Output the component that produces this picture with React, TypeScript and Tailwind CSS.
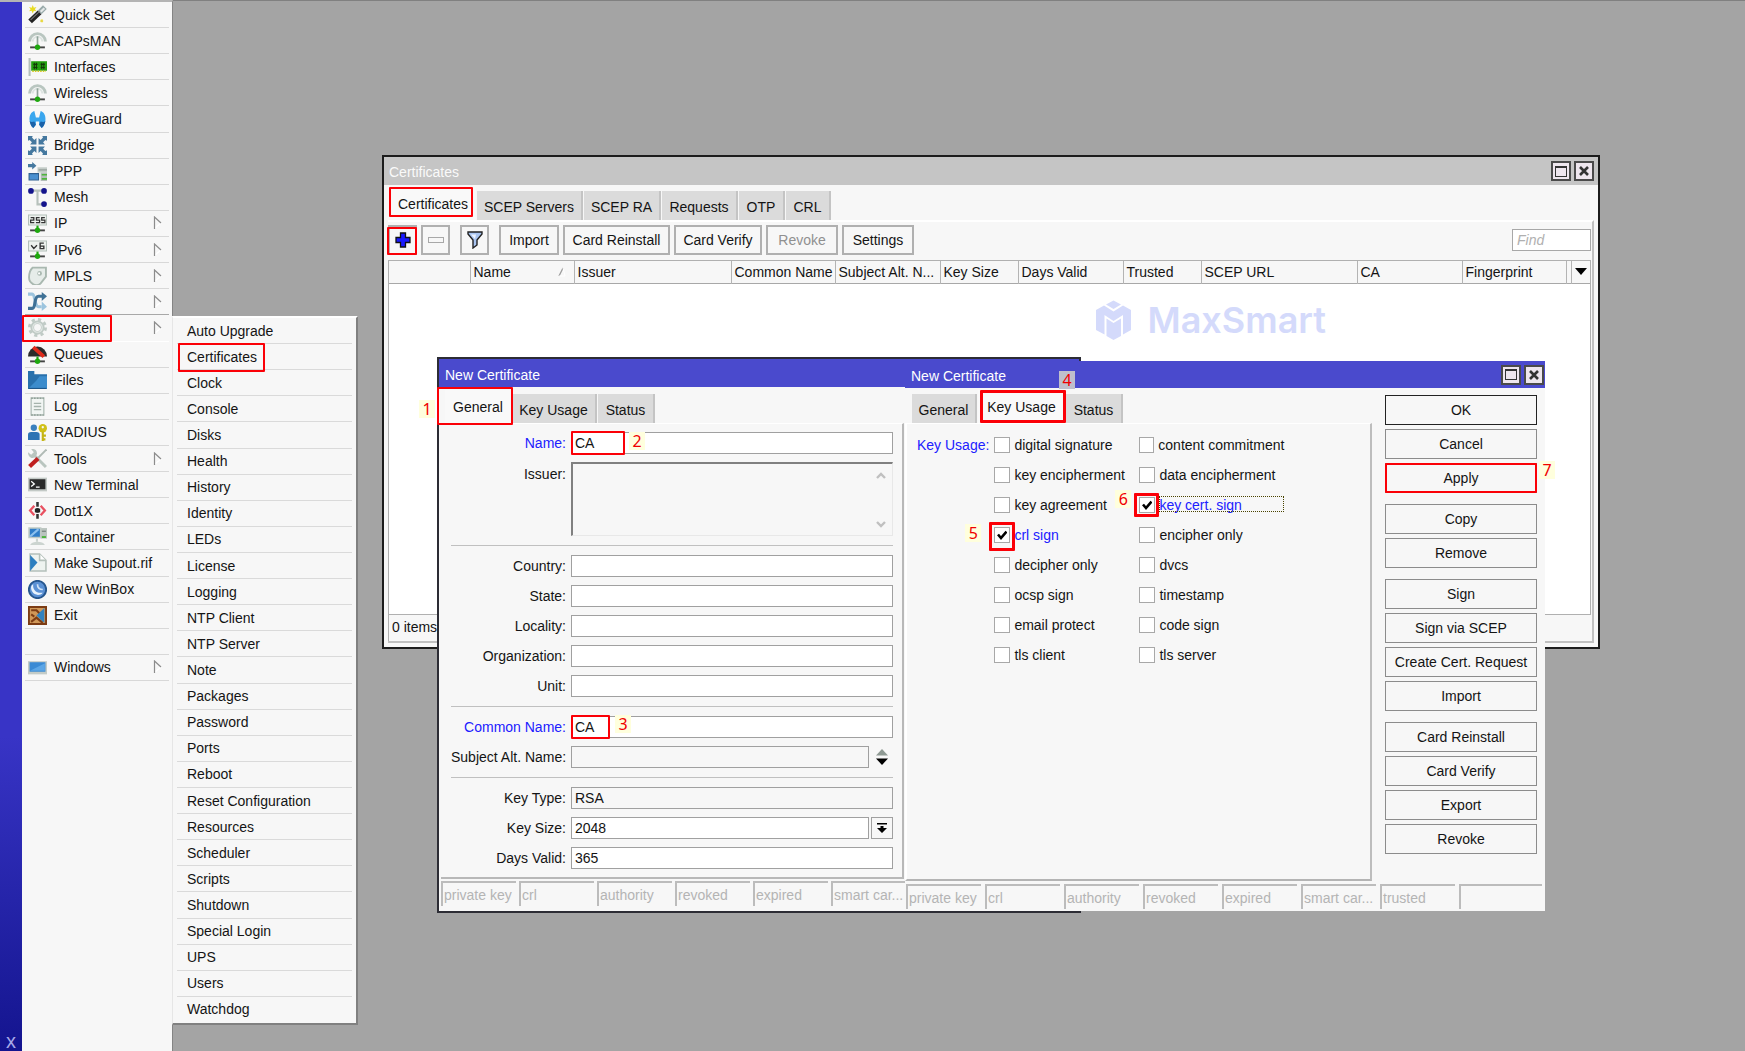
import { ReactNode, useState } from "react";
import cx from "clsx";

type MenuItem = { label: string; icon: ReactNode; more?: boolean };

const Plug = () => (
  <>
    <path d="M2 15.5h14" stroke="#444" strokeWidth="1.8" />
    <circle cx="9" cy="15.4" r="2.5" fill="#1fa80f" />
  </>
);

const Antenna = () => (
  <>
    <path d="M1.5 10a7.5 7.5 0 0 1 15 0" fill="none" stroke="#b9c6c0" strokeWidth="2.8" />
    <path d="M4.5 10a4.5 4.5 0 0 1 9 0" fill="none" stroke="#dde4e1" strokeWidth="1.8" />
    <path d="M9 5v9" stroke="#8fa39a" strokeWidth="1.6" />
    <Plug />
  </>
);

const icons = {
  quickSet: (
    <>
      <path d="M2 15.5 11 7" stroke="#222" strokeWidth="5" />
      <path d="M11 7l5-5" stroke="#9aa" strokeWidth="5" />
      <path d="M12 6.500l3.500-3.500" stroke="#e4e8e8" strokeWidth="2" />
      <path d="M2.500 14 11 6" stroke="#777" strokeWidth="1" />
      <path d="M4.500 0l1 2.500L8 2l-1.500 2L8 6 5.500 5.500 4.500 8 3.500 5.500 1 6l1.500-2L1 2l2.500.5z" fill="#e8dc22" />
      <path d="M12 14l2 2m0-2l-2 2" stroke="#e8d840" strokeWidth="1.4" />
    </>
  ),
  interfaces: (
    <>
      <path d="M1.500 1v17" stroke="#b4c0bb" strokeWidth="2" />
      <path d="M3 4h15v9H3z" fill="#22a010" />
      <path d="M4 13.500h13" stroke="#d8c820" strokeWidth="1.500" strokeDasharray="1.500 1" />
      <path d="M5 7h4M5 10h4M6 5.500v6M8 5.500v6M12 7h4M12 10h4M13 5.500v6M15 5.500v6" stroke="#123808" strokeWidth="1" />
    </>
  ),
  wireGuard: (
    <>
      <path d="M6 1C3 2 1 5 1.500 10 2 12 2.500 15 5 17L7.500 14 7.500 11h3v3l2.500 3c2.500-2 3-5 3.500-7C17 5 15 2 12 1l-1.500 6h-3z" fill="#3aa6ee" />
      <path d="M1.500 10.500C3 12 5 11 6 11l1.500 3L5 17c-2-1-3-4-3.500-6.500zM16.500 10.500C15 12 13 11 12 11l-1.500 3L13 17c2-1 3-4 3.500-6.500z" fill="#1b62a8" />
    </>
  ),
  bridge: (
    <path
      d="M0 0h4.500L3.800 1.500 6 3.700 8 2v6H2l1.700-2L1.500 3.800 0 4.500zM18 0h-4.500l.7 1.500L12 3.700 10 2v6h6l-1.700-2 2.200-2.200 1.500.7zM0 18h4.500l-.7-1.500L6 14.300 8 16v-6H2l1.700 2-2.200 2.200-1.500-.7zM18 18h-4.500l.7-1.500L12 14.300 10 16v-6h6l-1.700 2 2.200 2.200 1.500-.7z"
      fill="#45789f"
    />
  ),
  ppp: (
    <>
      <path d="M0 2h4V0l4 3.500L4 7V5H0z" fill="#45789f" />
      <path d="M1 11h9v6H1z" fill="#4a90d0" stroke="#2f5f8f" />
      <path d="M9 5h9v5H9z" fill="#c4ccc8" />
      <path d="M12 10h6v8h-6z" fill="#b4beb9" />
      <path d="M13 12h5M13 16h5" stroke="#4fb53c" strokeWidth="1.500" />
      <path d="M10 7.500h8" stroke="#8b9691" />
    </>
  ),
  mesh: (
    <>
      <path d="M2.500 2.500h13M9 2.500v13h7" fill="none" stroke="#b7c1bc" strokeWidth="2" />
      <circle cx="2.800" cy="2.800" r="2.700" fill="#14148c" />
      <circle cx="15.200" cy="2.800" r="2.700" fill="#14148c" />
      <circle cx="15.200" cy="15.200" r="2.700" fill="#14148c" />
    </>
  ),
  ip: (
    <>
      <path d="M.5 1h17v9.500H.5z" fill="#eef2ef" stroke="#b4c0ba" />
      <path d="M2.500 3.500h3v2.300h-3v2.400h3.500M7.500 8.200H11V5.800H8V3.500h3M12.500 8.200H16V5.800h-3V3.500h3" fill="none" stroke="#333" strokeWidth="1.200" />
      <path d="M9 11v3" stroke="#1fa80f" strokeWidth="2" />
      <Plug />
    </>
  ),
  ipv6: (
    <>
      <path d="M.5 1h17v9.500H.5z" fill="#eef2ef" stroke="#b4c0ba" />
      <path d="M3 5l2.500 3L8.500 5M15 3h-3.500v5.200H15V5.800h-3" fill="none" stroke="#333" strokeWidth="1.300" />
      <path d="M9 11v3" stroke="#1fa80f" strokeWidth="2" />
      <Plug />
    </>
  ),
  mpls: (
    <>
      <path d="M4.500 1.500H17V10l-5 6.500a6 6 0 0 1-7.500.5A7 7 0 0 1 1 11c0-4 .5-7 3.500-9.500z" fill="#e6ece9" stroke="#a9b8b0" strokeWidth="1.800" />
      <circle cx="11" cy="7" r="2.200" fill="#a9b8b0" />
      <circle cx="10.500" cy="7" r="1" fill="#fff" />
    </>
  ),
  routing: (
    <>
      <path d="M0 2h4c3 0 2 12 6 12h3" fill="none" stroke="#9cc4de" strokeWidth="3" />
      <path d="M13 9l5 5-5 4z" fill="#9cc4de" />
      <path d="M0 15.500h4c4 0 1-11.500 6-11.500h4" fill="none" stroke="#3f7196" strokeWidth="3" />
      <path d="M13 0l5 4-5 4.500z" fill="#3f7196" />
    </>
  ),
  system: (
    <>
      <circle cx="9" cy="9" r="5" fill="none" stroke="#c0cbc6" strokeWidth="3.500" />
      <circle cx="9" cy="9" r="7.600" fill="none" stroke="#c0cbc6" strokeWidth="2.800" strokeDasharray="3 3" />
      <circle cx="9" cy="9" r="4.500" fill="none" stroke="#e4eae7" strokeWidth="1" />
    </>
  ),
  queues: (
    <>
      <path d="M0 11a9 9.500 0 0 1 18 0z" fill="#2b2b2b" />
      <path d="M5 2l10 9" stroke="#e02c1c" strokeWidth="3.600" />
      <path d="M9 11v3" stroke="#1fa80f" strokeWidth="2" />
      <Plug />
    </>
  ),
  files: (
    <>
      <path d="M0 0h6v3h12v14H0z" fill="#2870ac" />
      <path d="M0 17L8 9l3-4h7v12z" fill="#3c8ccc" />
      <path d="M.5 16.500h17" stroke="#1d5486" />
    </>
  ),
  log: (
    <>
      <path d="M3 1h12v16H3z" fill="#f1f5f3" stroke="#b4c0ba" strokeWidth="1.300" />
      <path d="M3 1.200h12M3 17h12" stroke="#8fa097" strokeWidth="1.500" strokeDasharray="1.500 1.200" />
      <path d="M5.500 6h7M5.500 9h7M5.500 12h7" stroke="#a5b3ac" strokeWidth="1.200" />
    </>
  ),
  radius: (
    <>
      <circle cx="5.500" cy="4.500" r="3" fill="#3a80be" />
      <path d="M0 16V11q0-2.500 3-2.500h5q3 0 3 2.500v5z" fill="#2f74b4" />
      <circle cx="14" cy="5" r="4" fill="#d0c018" />
      <circle cx="14" cy="4" r="1.100" fill="#f7f7f7" />
      <path d="M14 8v9M14 12h3M14 15.500h2.500" stroke="#c4b414" strokeWidth="2" />
    </>
  ),
  tools: (
    <>
      <path d="M5 5l12 12" stroke="#b9c5bf" strokeWidth="2.800" />
      <path d="M0 3l3 2.500L5.500 3 3 0c3-.5 6 1 5.500 5L5 8.500C2 9 0 6 0 3z" fill="#b9c5bf" />
      <path d="M17.500.5L9 9" stroke="#b0bab5" strokeWidth="1.800" />
      <path d="M1.500 16.500L9.500 9" stroke="#c02020" strokeWidth="4" />
    </>
  ),
  terminal: (
    <>
      <path d="M0 2.500h18v13H0z" fill="#c3c9c6" />
      <path d="M1.500 4h15v9.500h-15z" fill="#2a2a2a" />
      <path d="M3 6l3 2.500L3 11M7.500 11.500H11" fill="none" stroke="#fff" strokeWidth="1.200" />
    </>
  ),
  dot1x: (
    <>
      <path d="M6 4.500L2 9l4 4.500M12 4.500L16 9l-4 4.500" fill="none" stroke="#e85060" strokeWidth="2.200" />
      <path d="M9 1v16" stroke="#333" strokeWidth="2.400" strokeDasharray="4.500 1.200" />
      <path d="M6.500 9h5" stroke="#222" strokeWidth="3.600" />
    </>
  ),
  container: (
    <>
      <path d="M12 1h6v10h-6z" fill="#b9c3be" />
      <path d="M13 4h4" stroke="#6d7772" />
      <path d="M13 9.500h4" stroke="#34b020" strokeWidth="1.500" />
      <path d="M1 1h11v9H1z" fill="#2f7dc8" stroke="#c0cac5" strokeWidth="1.500" />
      <path d="M2 9l8-7" stroke="#8cc0ee" strokeWidth="2" />
      <path d="M2 17c2-4 12-4 14 0z" fill="#ccd4d0" />
      <path d="M8.500 11v3" stroke="#ccd4d0" strokeWidth="2" />
    </>
  ),
  supout: (
    <>
      <path d="M2 1h9l6 6v10H2z" fill="#eef3f0" stroke="#b4c0ba" strokeWidth="1.500" />
      <path d="M11 1v6h6" fill="#fff" stroke="#b4c0ba" strokeWidth="1.500" />
      <path d="M2 2l7 7-7 8z" fill="#2c7fc0" />
    </>
  ),
  winbox: (
    <>
      <circle cx="9" cy="9" r="8.200" fill="#5a90d4" stroke="#26568e" strokeWidth="1.800" />
      <path d="M5 4c-1 5 3 9 9 8-2 3-8 3-10-1S3 5 5 4z" fill="#e8f2fc" />
      <path d="M9 4c0 3 2 5 5 5" fill="none" stroke="#cfe2f6" strokeWidth="1.600" />
    </>
  ),
  exit: (
    <>
      <path d="M.8.8h16.400v16.400H.8z" fill="#d09858" stroke="#7c3c14" strokeWidth="2" />
      <path d="M3 4h5l3 3M3 8l3 2M3 15l5-4 6 5" fill="none" stroke="#7c3c14" strokeWidth="2" />
      <path d="M15.500 2v14L8 9z" fill="#3182c0" />
    </>
  ),
  windows: (
    <>
      <path d="M0 3h18v12.500H0z" fill="#c3cbc7" />
      <path d="M1.500 4h15v9h-15z" fill="#3a8ad4" />
      <path d="M2 12l14-7v7z" fill="#5ca6e6" />
    </>
  ),
};

const menu: (MenuItem | null)[] = [
  { label: "Quick Set", icon: icons.quickSet },
  { label: "CAPsMAN", icon: <Antenna /> },
  { label: "Interfaces", icon: icons.interfaces },
  { label: "Wireless", icon: <Antenna /> },
  { label: "WireGuard", icon: icons.wireGuard },
  { label: "Bridge", icon: icons.bridge },
  { label: "PPP", icon: icons.ppp },
  { label: "Mesh", icon: icons.mesh },
  { label: "IP", icon: icons.ip, more: true },
  { label: "IPv6", icon: icons.ipv6, more: true },
  { label: "MPLS", icon: icons.mpls, more: true },
  { label: "Routing", icon: icons.routing, more: true },
  { label: "System", icon: icons.system, more: true },
  { label: "Queues", icon: icons.queues },
  { label: "Files", icon: icons.files },
  { label: "Log", icon: icons.log },
  { label: "RADIUS", icon: icons.radius },
  { label: "Tools", icon: icons.tools, more: true },
  { label: "New Terminal", icon: icons.terminal },
  { label: "Dot1X", icon: icons.dot1x },
  { label: "Container", icon: icons.container },
  { label: "Make Supout.rif", icon: icons.supout },
  { label: "New WinBox", icon: icons.winbox },
  { label: "Exit", icon: icons.exit },
  null,
  { label: "Windows", icon: icons.windows, more: true },
];

const systemMenu = [
  "Auto Upgrade", "Certificates", "Clock", "Console", "Disks", "Health", "History",
  "Identity", "LEDs", "License", "Logging", "NTP Client", "NTP Server", "Note",
  "Packages", "Password", "Ports", "Reboot", "Reset Configuration", "Resources",
  "Scheduler", "Scripts", "Shutdown", "Special Login", "UPS", "Users", "Watchdog",
];

const columns = [
  { label: "", width: "w-[81px]" },
  { label: "Name", width: "w-[104px]", sorted: true },
  { label: "Issuer", width: "w-[157px]" },
  { label: "Common Name", width: "w-[104px]" },
  { label: "Subject Alt. N...", width: "w-[105px]" },
  { label: "Key Size", width: "w-[78px]" },
  { label: "Days Valid", width: "w-[105px]" },
  { label: "Trusted", width: "w-[78px]" },
  { label: "SCEP URL", width: "w-[156px]" },
  { label: "CA", width: "w-[105px]" },
  { label: "Fingerprint", width: "w-[104px]" },
  { label: "", width: "w-[5px]" },
];

const usages = [
  "digital signature", "content commitment",
  "key encipherment", "data encipherment",
  "key agreement", "key cert. sign",
  "crl sign", "encipher only",
  "decipher only", "dvcs",
  "ocsp sign", "timestamp",
  "email protect", "code sign",
  "tls client", "tls server",
];

const actions = [
  ["OK", "Cancel", "Apply"],
  ["Copy", "Remove"],
  ["Sign", "Sign via SCEP", "Create Cert. Request", "Import"],
  ["Card Reinstall", "Card Verify", "Export", "Revoke"],
];

const flags = ["private key", "crl", "authority", "revoked", "expired", "smart car..."];

// red frame laid over a control
function Mark({ className }: { className: string }) {
  return <span className={cx("pointer-events-none absolute z-10 rounded-[1px] border-[#fb0007]", className)} />;
}

// numbered step label
function Step({ n, className }: { n: number; className: string }) {
  return (
    <span
      className={cx(
        "pointer-events-none absolute z-20 flex h-[18px] w-4 items-center justify-center font-['Noto_Sans',sans-serif] text-base leading-none text-[#f00000]",
        className
      )}
    >
      {n}
    </span>
  );
}

function TitleBar({ title, className, controls = true }: { title: string; className: string; controls?: boolean }) {
  return (
    <header className={cx("flex items-center", className)}>
      <h2 className="flex-1 pt-[2px] text-sm">{title}</h2>
      {controls && (
        <div className="flex gap-[3px]">
          <button aria-label="Maximize" className="flex size-5 items-center justify-center border-2 border-[#4a4a4a] bg-[#eee6ee]">
            <span className="h-[11px] w-3 border border-t-2 border-[#333]" />
          </button>
          <button aria-label="Close" className="flex size-5 items-center justify-center border-2 border-[#4a4a4a] bg-[#eee6ee]">
            <svg viewBox="0 0 10 10" className="size-[10px]">
              <path d="M1 1l8 8M9 1L1 9" stroke="#333" strokeWidth="2.600" />
            </svg>
          </button>
        </div>
      )}
    </header>
  );
}

function Tab({ label, active, className }: { label: string; active?: boolean; className: string }) {
  return (
    <button
      role="tab"
      aria-selected={!!active}
      className={cx(
        "flex justify-center text-sm whitespace-nowrap",
        active ? "h-[33px] bg-[#f9f9f9] pt-[7px]" : "h-[29px] items-center border-r-2 border-[#c4c4c4] bg-[#dbdbdb] pt-[2px]",
        className
      )}
    >
      {label}
    </button>
  );
}

function ToolButton({ children, className, disabled, label }: { children: ReactNode; className: string; disabled?: boolean; label?: string }) {
  return (
    <button
      aria-label={label}
      disabled={disabled}
      className={cx("flex h-[30px] items-center justify-center border-2 border-[#b0b0b0] bg-[#f7f7f7] text-sm whitespace-nowrap disabled:text-[#909090]", className)}
    >
      {children}
    </button>
  );
}

function Field({ id, label, value = "", blue, readOnly, children, after }: {
  id: string;
  label: string;
  value?: string;
  blue?: boolean;
  readOnly?: boolean;
  children?: ReactNode;
  after?: ReactNode;
}) {
  return (
    <div className="flex items-center gap-[5px]">
      <label htmlFor={id} className={cx("w-[115px] text-right text-sm whitespace-nowrap", blue && "text-[#2020ff]")}>
        {label}:
      </label>
      <div className="relative flex flex-1 gap-[2px]">
        <input
          id={id}
          defaultValue={value}
          readOnly={readOnly}
          className={cx(
            "h-[22px] w-full min-w-0 flex-1 border border-[#a0a0a0] px-[3px] text-sm outline-none",
            readOnly ? "bg-[#f7f7f7]" : "bg-white"
          )}
        />
        {after}
        {children}
      </div>
    </div>
  );
}

const Divider = () => (
  <div className="h-[3px] py-[1px]">
    <div className="h-px bg-[#c0c0c0]" />
  </div>
);

function StatusCell({ children, grow }: { children?: ReactNode; grow?: boolean }) {
  return (
    <span
      className={cx(
        "h-[25px] border-t-2 border-l-2 border-[#bcbcbc] pl-px text-sm leading-6 whitespace-nowrap text-[#b4b4b4]",
        grow ? "flex-1" : "w-[75px]"
      )}
    >
      {children}
    </span>
  );
}

function Sidebar() {
  return (
    <nav className="w-[151px] border-t-2 border-r border-t-[#b4b4b4] border-r-[#848484] bg-[#f7f7f7]">
      <ul className="grid h-[679px] auto-rows-fr pr-[3px] pl-[3px]">
        {menu.map((item, i) => (
          <li
            key={i}
            className={cx(
              "relative border-b",
              item?.label === "Routing" ? "border-[#a8a8a8]" : item?.label === "System" ? "border-white" : "border-[#d8d8d8]"
            )}
          >
            {item && (
              <button className="flex h-full w-full items-center gap-[7px] pl-[3px] text-sm whitespace-nowrap">
                <svg viewBox="0 0 18 18" className="size-[19px] shrink-0">
                  {item.icon}
                </svg>
                <span className="flex-1 text-left">{item.label}</span>
                {item.more && (
                  <svg viewBox="0 0 9 14" className="mr-[7px] h-[14px] w-[9px]">
                    <path d="M2 12L8 7" stroke="#fff" strokeWidth="1.500" />
                    <path d="M1.500 13V1L8 7" fill="none" stroke="#8c8c8c" strokeWidth="1.200" />
                  </svg>
                )}
              </button>
            )}
            {item?.label === "System" && <Mark className="top-0 -left-[3px] h-[27px] w-[90px] border-2" />}
          </li>
        ))}
      </ul>
    </nav>
  );
}

function SystemMenu() {
  return (
    <div className="absolute top-[316px] left-[172px] w-[186px] border-t-2 border-r-2 border-b-2 border-l border-t-white border-r-[#808080] border-b-[#808080] border-l-[#e6e6e6] bg-[#f7f7f7] pr-[4px] pl-[4px]">
      <ul className="grid h-[705px] auto-rows-fr">
        {systemMenu.map((label) => (
          <li key={label} className="relative border-b border-[#dadada] last:border-transparent">
            <button className="flex h-full w-full items-center pl-[10px] text-sm whitespace-nowrap">{label}</button>
            {label === "Certificates" && <Mark className="-top-[1px] left-[1px] h-[29px] w-[87px] border-2" />}
          </li>
        ))}
      </ul>
    </div>
  );
}

function CertificatesWindow() {
  return (
    <section className="absolute top-[155px] left-[382px] flex h-[494px] w-[1218px] flex-col border-2 border-[#1c1c1c] bg-[#f7f7f7]">
      <TitleBar title="Certificates" className="h-7 bg-[#c5c5c5] pr-[4px] pl-[5px] text-[#fafafa]" />
      <div role="tablist" className="relative flex h-[35px] items-end gap-px pl-[6px]">
        <Tab label="Certificates" active className="w-[86px]" />
        <Tab label="SCEP Servers" className="w-[106px]" />
        <Tab label="SCEP RA" className="w-[77px]" />
        <Tab label="Requests" className="w-[76px]" />
        <Tab label="OTP" className="w-[46px]" />
        <Tab label="CRL" className="w-[45px]" />
        <Mark className="top-[2px] left-[5px] h-[30px] w-[84px] border-2" />
      </div>
      <div className="mr-1 mb-1 ml-1 flex flex-1 flex-col border-t-2 border-r-2 border-b-2 border-t-white border-r-[#c0c0c0] border-b-[#c0c0c0] pr-[1px]">
        <div className="relative flex h-[38px] items-center gap-1 pb-[2px]">
          <ToolButton label="Add" className="w-[29px]">
            <svg viewBox="0 0 16 16" className="size-4">
              <path d="M5.500 1h5v4.500H15v5h-4.500V15h-5v-4.500H1v-5h4.500z" fill="#1a1aff" stroke="#111" strokeWidth="1.300" />
            </svg>
          </ToolButton>
          <ToolButton label="Remove" disabled className="w-[29px]">
            <span className="h-[6px] w-4 border border-[#a8a8a8]" />
          </ToolButton>
          <ToolButton label="Filter" className="mx-[6px] w-[29px]">
            <svg viewBox="0 0 16 18" className="h-[18px] w-4">
              <path d="M1 1h14v2L10 9v5l-4 3V9L1 3z" fill="#a9c4f0" stroke="#222" strokeWidth="1.400" />
              <path d="M4 3.500h5L8 8z" fill="#eef4ff" />
            </svg>
          </ToolButton>
          <ToolButton className="w-[60px]">Import</ToolButton>
          <ToolButton className="w-[107px]">Card Reinstall</ToolButton>
          <ToolButton className="w-[88px]">Card Verify</ToolButton>
          <ToolButton disabled className="w-[72px]">Revoke</ToolButton>
          <ToolButton className="w-[72px]">Settings</ToolButton>
          <input
            aria-label="Find"
            placeholder="Find"
            className="ml-auto h-[22px] w-[79px] border border-[#a8a8a8] bg-white px-1 text-sm outline-none placeholder:text-[#b0b0b0] placeholder:italic"
          />
          <Mark className="top-[5px] -left-[1px] h-7 w-[30px] border-2" />
        </div>
        <div className="flex flex-1 flex-col border border-[#b0b0b0] bg-white">
          <table className="w-full table-fixed border-collapse text-left text-sm">
            <thead>
              <tr className="h-[22px] border-b border-[#a8a8a8] bg-[#f7f7f7]">
                {columns.map((col, i) => (
                  <th key={i} className={cx("border-r border-[#b4b4b4] p-0 font-normal whitespace-nowrap", col.width)}>
                    <span className="flex items-center justify-between pr-1 pl-[3px]">
                      {col.label}
                      {col.sorted && (
                        <svg viewBox="0 0 8 10" className="mr-1 h-[10px] w-2">
                          <path d="M1 9L5 1" stroke="#999" strokeWidth="1.200" />
                          <path d="M5 1l2 8H1" fill="none" stroke="#fff" />
                        </svg>
                      )}
                    </span>
                  </th>
                ))}
                <th className="p-0">
                  <button aria-label="Columns" className="flex h-5 w-full items-center justify-center">
                    <svg viewBox="0 0 12 8" className="h-2 w-3">
                      <path d="M0 0h12L6 7z" fill="#000" />
                    </svg>
                  </button>
                </th>
              </tr>
            </thead>
            <tbody />
          </table>
          <div className="flex items-center gap-4 self-end pt-4 pr-[264px] text-[#d4dafb]">
            <svg viewBox="0 0 35 40" className="h-10 w-[35px]" fill="currentColor">
              <path d="M17.500.5L25 4.500 17.500 9 10 4.500z" />
              <path d="M0 10L8 5.500l9.500 6 9.500-6 8 4.500v20l-8 4.500V15l-9.500 6-9-6v19.500L0 30z" />
              <path d="M10.500 18.500l7 4.500 7.500-4.500V36l-7.500 4-7-4z" />
            </svg>
            <span className="font-['Inter',sans-serif] text-4xl font-semibold">MaxSmart</span>
          </div>
        </div>
        <footer className="h-[26px] border-l border-[#b0b0b0] pl-[3px] text-sm leading-6">0 items</footer>
      </div>
    </section>
  );
}

function GeneralWindow() {
  return (
    <section className="absolute top-[357px] left-[437px] h-[556px] w-[644px] border-2 border-[#2c2c34] bg-[#f7f7f7]">
      <TitleBar title="New Certificate" controls={false} className="h-7 bg-[#4a4acd] pt-[2px] pl-[6px] text-white" />
      <div role="tablist" className="relative flex h-9 items-end gap-px pl-[6px]">
        <Tab label="General" active className="w-[66px]" />
        <Tab label="Key Usage" className="w-[85px]" />
        <Tab label="Status" className="w-[57px]" />
        <Mark className="top-0 -left-[2px] h-[38px] w-[76px] border-2" />
        <Step n={1} className="top-[13px] -left-[20px] bg-[#ffffdd]" />
      </div>
      <form className="ml-[2px] flex w-[463px] flex-col gap-2 border-t border-r-2 border-b-2 border-t-white border-r-[#b8b8b8] border-b-[#b8b8b8] pt-2 pr-[9px] pb-2 pl-[10px]">
        <Field id="name" label="Name" value="CA" blue>
          <Mark className="-top-[1px] left-0 h-6 w-[54px] border-2" />
          <Step n={2} className="top-0 left-[58px] bg-[#ffffdd]" />
        </Field>
        <div className="flex gap-[5px]">
          <label htmlFor="issuer" className="w-[115px] pt-[2px] text-right text-sm">Issuer:</label>
          <div className="relative flex flex-1">
            <textarea
              id="issuer"
              readOnly
              className="h-[74px] flex-1 resize-none border-t-2 border-r border-b border-l-2 border-t-[#808080] border-r-[#e8e8e8] border-b-[#e8e8e8] border-l-[#808080] bg-[#f7f7f7] outline-none"
            />
            <div className="absolute top-[10px] right-[7px] flex h-[56px] flex-col justify-between">
              <svg viewBox="0 0 10 7" className="h-[7px] w-[10px]">
                <path d="M1 6l4-4 4 4" fill="none" stroke="#c0c0c0" strokeWidth="2.400" />
              </svg>
              <svg viewBox="0 0 10 7" className="h-[7px] w-[10px]">
                <path d="M1 1l4 4 4-4" fill="none" stroke="#c0c0c0" strokeWidth="2.400" />
              </svg>
            </div>
          </div>
        </div>
        <Divider />
        <Field id="country" label="Country" />
        <Field id="state" label="State" />
        <Field id="locality" label="Locality" />
        <Field id="organization" label="Organization" />
        <Field id="unit" label="Unit" />
        <Divider />
        <Field id="commonName" label="Common Name" value="CA" blue>
          <Mark className="-top-[1px] left-0 h-6 w-[39px] border-2" />
          <Step n={3} className="-top-[1px] left-[44px] bg-[#ffffdd]" />
        </Field>
        <Field
          id="altName"
          label="Subject Alt. Name"
          readOnly
          after={
            <button type="button" aria-label="Add name" className="flex w-[22px] items-center justify-center">
              <svg viewBox="0 0 12 16" className="h-4 w-3">
                <path d="M0 6.500h12L6 0z" fill="#8f9a94" />
                <path d="M0 9.500h12L6 16z" fill="#000" />
              </svg>
            </button>
          }
        />
        <Divider />
        <Field id="keyType" label="Key Type" value="RSA" readOnly />
        <Field
          id="keySize"
          label="Key Size"
          value="2048"
          after={
            <button type="button" aria-label="Choose key size" className="flex w-[22px] items-center justify-center border border-[#a0a0a0]">
              <svg viewBox="0 0 10 10" className="size-[10px]">
                <path d="M0 0h10v1.500H0zM3.500 3h3v2H10L5 10 0 5h3.500z" fill="#000" />
              </svg>
            </button>
          }
        />
        <Field id="daysValid" label="Days Valid" value="365" />
      </form>
      <footer className="flex gap-[3px] pt-[2px] pl-[2px]">
        {flags.map((flag) => (
          <StatusCell key={flag}>{flag}</StatusCell>
        ))}
      </footer>
    </section>
  );
}

function KeyUsageWindow() {
  const [checked, setChecked] = useState<string[]>(["crl sign", "key cert. sign"]);

  const toggle = (usage: string) => {
    setChecked(checked.includes(usage) ? checked.filter((u) => u !== usage) : [...checked, usage]);
  };

  return (
    <section className="absolute top-[361px] left-[905px] w-[640px] bg-[#f7f7f7] pb-[2px]">
      <TitleBar title="New Certificate" className="h-[27px] bg-[#4a4acd] pr-[1px] pl-[6px] text-white" />
      <div className="flex justify-between pr-2">
        <div className="w-[467px]">
          <div role="tablist" className="relative flex h-[35px] items-end gap-px pl-[7px]">
            <Tab label="General" className="w-[65px]" />
            <Tab label="Key Usage" active className="w-[87px]" />
            <Tab label="Status" className="w-[57px]" />
            <Mark className="top-[2px] left-[75px] h-[33px] w-[86px] border-3" />
            <Step n={4} className="-top-[17px] left-[154px] bg-[#bfbfcc]" />
          </div>
          <div className="flex h-[458px] gap-[5px] border-t border-r-2 border-b-2 border-l-2 border-t-white border-r-[#bdbdbd] border-b-[#b4b4b4] border-l-white pt-[11px] pl-[10px]">
            <span className="text-sm whitespace-nowrap text-[#2020ff]">Key Usage:</span>
            <div className="grid h-[230px] grid-cols-[145px_145px] content-start gap-y-[10px]">
              {usages.map((usage) => (
                <label key={usage} className={cx("relative flex h-5 items-center gap-1 text-sm whitespace-nowrap", checked.includes(usage) && "text-[#2020ff]")}>
                  <input
                    type="checkbox"
                    checked={checked.includes(usage)}
                    onChange={() => toggle(usage)}
                    className="peer size-4 appearance-none border border-[#a8a8a8] bg-white"
                  />
                  <svg viewBox="0 0 10 10" className="pointer-events-none absolute left-[3px] hidden size-[10px] peer-checked:block">
                    <path d="M1 4.500l3 3.500L9.500 1.500" fill="none" stroke="#000" strokeWidth="2.600" />
                  </svg>
                  {usage}
                  {usage === "key cert. sign" && (
                    <>
                      <span className="absolute top-px left-5 h-4 w-[125px] border border-dotted border-[#4a4400]" />
                      <Mark className="-top-[2px] -left-[5px] h-6 w-[25px] border-3" />
                      <Step n={6} className="-top-[5px] -left-[24px] bg-[#ffffdd]" />
                    </>
                  )}
                  {usage === "crl sign" && (
                    <>
                      <Mark className="-top-[3px] -left-[5px] h-[29px] w-[26px] border-3" />
                      <Step n={5} className="-top-[1px] -left-[29px] bg-[#ffffdd]" />
                    </>
                  )}
                </label>
              ))}
            </div>
          </div>
        </div>
        <div className="flex w-[152px] flex-col gap-[11px] pt-[7px]">
          {actions.map((group, i) => (
            <div key={i} className="flex flex-col gap-1">
              {group.map((label) => (
                <div key={label} className="relative flex">
                  <button
                    className={cx(
                      "h-[30px] flex-1 border bg-[#f7f7f7] text-sm whitespace-nowrap",
                      label === "OK" ? "border-[#222]" : "border-[#8c8c8c]"
                    )}
                  >
                    {label}
                  </button>
                  {label === "Apply" && (
                    <>
                      <Mark className="inset-0 border-2" />
                      <Step n={7} className="-top-[2px] left-[154px] bg-[#ffffdd]" />
                    </>
                  )}
                </div>
              ))}
            </div>
          ))}
        </div>
      </div>
      <footer className="flex gap-[4px] pt-[3px] pr-[3px] pl-px">
        {[...flags, "trusted"].map((flag) => (
          <StatusCell key={flag}>{flag}</StatusCell>
        ))}
        <StatusCell grow />
      </footer>
    </section>
  );
}

export default function App() {
  return (
    <div className="relative flex min-h-screen overflow-hidden bg-[#a4a4a4] font-['Liberation_Sans',Arial,sans-serif] text-[#141414]">
      <aside className="flex w-[22px] items-end justify-center border-t-2 border-[#b4b4b4] bg-linear-to-b from-[#3834c6] from-70% to-[#14148f]">
        <span className="text-xl leading-5 text-[#a8a8e8]">x</span>
      </aside>
      <Sidebar />
      <main className="flex-1 border-t border-[#808080]">
        <CertificatesWindow />
        <GeneralWindow />
        <KeyUsageWindow />
      </main>
      <SystemMenu />
    </div>
  );
}
